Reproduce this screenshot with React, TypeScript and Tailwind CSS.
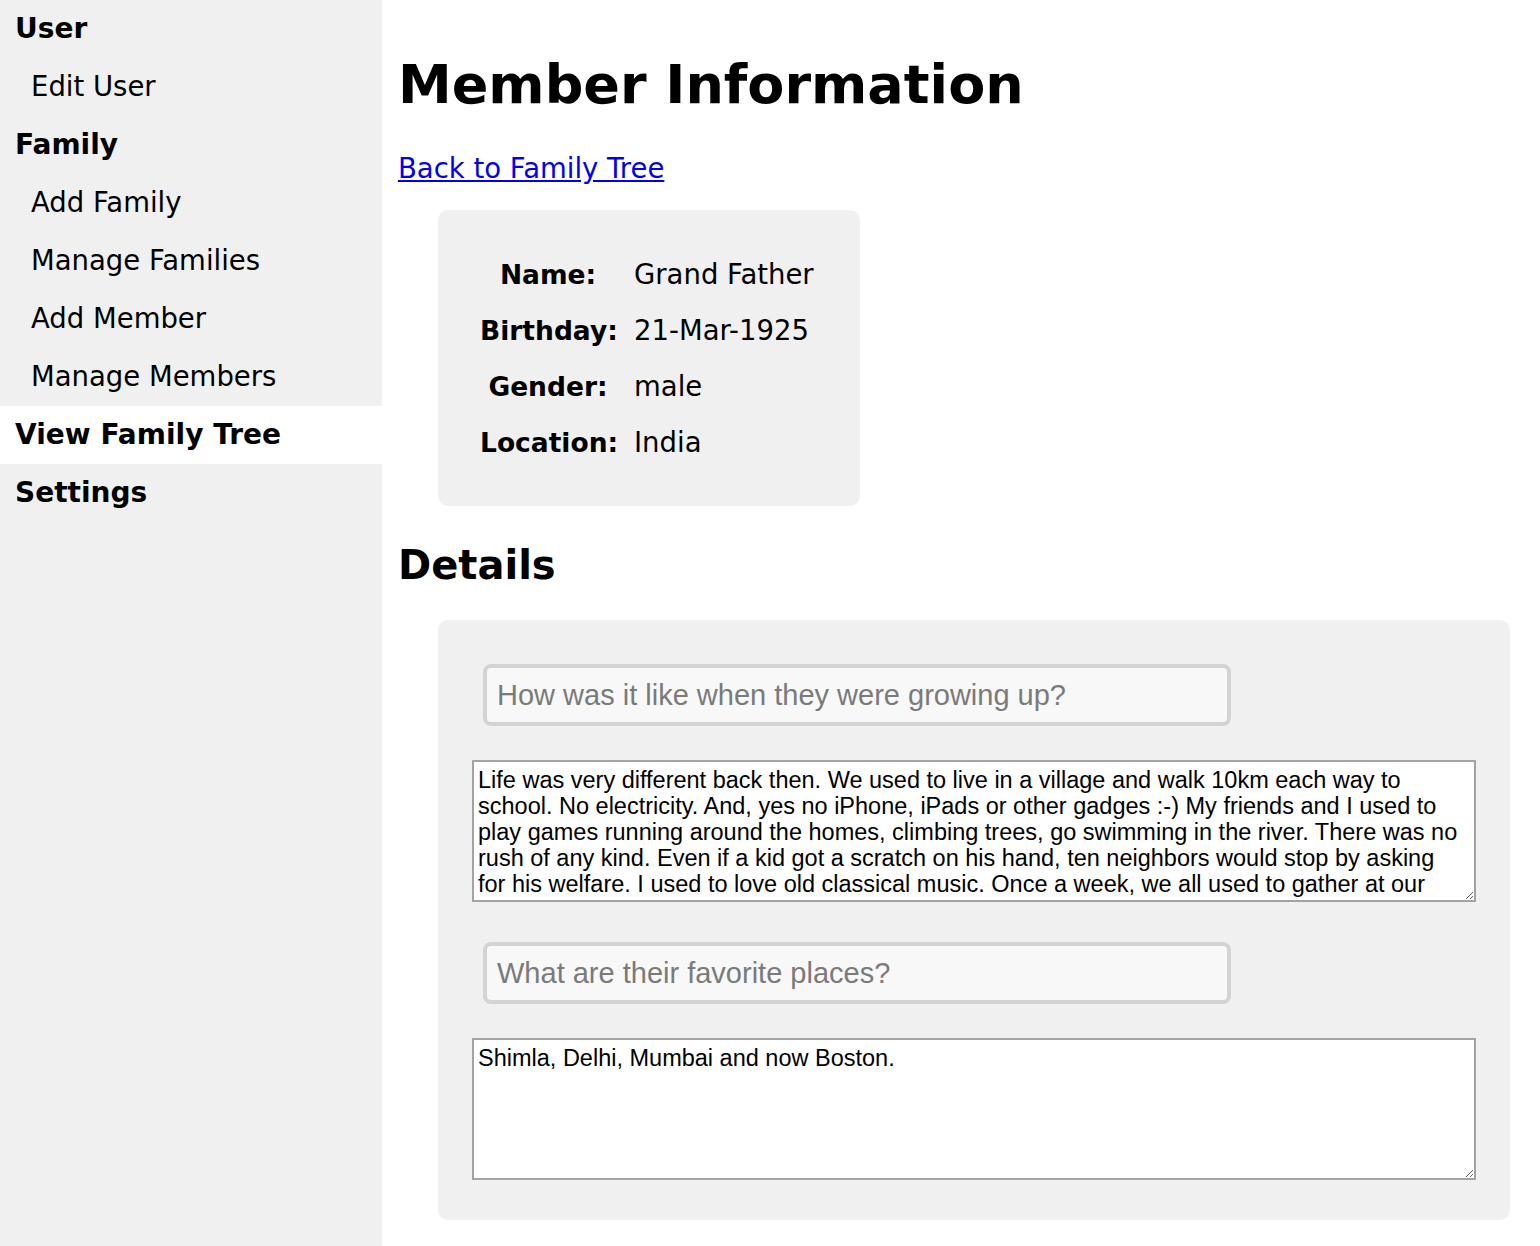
import React from "react";

const verdana = { fontFamily: '"DejaVu Sans", Verdana, sans-serif' };

const navItems: { label: string; bold?: boolean; active?: boolean }[] = [
  { label: "User", bold: true },
  { label: "Edit User" },
  { label: "Family", bold: true },
  { label: "Add Family" },
  { label: "Manage Families" },
  { label: "Add Member" },
  { label: "Manage Members" },
  { label: "View Family Tree", bold: true, active: true },
  { label: "Settings", bold: true },
];

const member = [
  ["Name:", "Grand Father"],
  ["Birthday:", "21-Mar-1925"],
  ["Gender:", "male"],
  ["Location:", "India"],
];

const story =
  "Life was very different back then. We used to live in a village and walk 10km each way to school. No electricity. And, yes no iPhone, iPads or other gadges :-) My friends and I used to play games running around the homes, climbing trees, go swimming in the river. There was no rush of any kind. Even if a kid got a scratch on his hand, ten neighbors would stop by asking for his welfare. I used to love old classical music. Once a week, we all used to gather at our village square and listen to the radio together.";

function Question({ placeholder }: { placeholder: string }) {
  return (
    <input
      type="text"
      placeholder={placeholder}
      className="ml-[11px] block h-[62px] w-[748px] rounded-[8px] border-[4px] border-[#d3d3d3] bg-[#f8f8f8] px-[10px] text-[29px] text-black outline-none placeholder:text-[#7a7a7a]"
      style={{ fontFamily: '"Liberation Sans", Arial, sans-serif' }}
    />
  );
}

function Answer({ value }: { value: string }) {
  return (
    <textarea
      defaultValue={value}
      className="block h-[142px] w-full overflow-hidden border-2 border-[#a3a3a3] bg-white py-[5px] pl-[4px] pr-[12px] text-[23.5px] leading-[26px] text-black outline-none"
      style={{ fontFamily: '"Liberation Sans", Arial, sans-serif' }}
    />
  );
}

export default function App() {
  return (
    <div className="flex min-h-[1246px] bg-white text-black" style={verdana}>
      {/* Sidebar */}
      <nav className="w-[382px] shrink-0 bg-[#f0f0f0]">
        {navItems.map((item) => (
          <div
            key={item.label}
            className={`flex h-[58px] items-center ${
              item.bold ? "pl-[15px] text-[28px] font-bold" : "pl-[31px] text-[27.5px]"
            } ${item.active ? "bg-white" : ""}`}
          >
            {item.label}
          </div>
        ))}
      </nav>

      {/* Main */}
      <main className="flex-1 pl-[16px] pr-[30px]">
        <h1 className="mt-[53px] text-[54px] font-bold leading-[64px]">Member Information</h1>
        <a href="#" className="mt-[34px] block w-fit text-[27.5px] leading-[34px] text-[#0000ee] underline">
          Back to Family Tree
        </a>

        <div className="ml-[40px] mt-[25px] w-[422px] rounded-[10px] bg-[#f0f0f0] pb-[35px] pl-[42px] pt-[37px]">
          {member.map(([label, value]) => (
            <div key={label} className="flex h-[56px] items-center">
              <span className="w-[136px] text-center text-[26.5px] font-bold">{label}</span>
              <span className="ml-[18px] text-[27.5px]">{value}</span>
            </div>
          ))}
        </div>

        <h2 className="mt-[34px] text-[40px] font-bold leading-[50px]">Details</h2>

        <div className="ml-[40px] mt-[30px] flex flex-col rounded-[10px] bg-[#f0f0f0] px-[34px] pb-[40px] pt-[44px]">
          <Question placeholder="How was it like when they were growing up?" />
          <div className="mt-[34px]">
            <Answer value={story} />
          </div>
          <div className="mt-[40px]">
            <Question placeholder="What are their favorite places?" />
          </div>
          <div className="mt-[34px]">
            <Answer value="Shimla, Delhi, Mumbai and now Boston." />
          </div>
        </div>
      </main>
    </div>
  );
}
